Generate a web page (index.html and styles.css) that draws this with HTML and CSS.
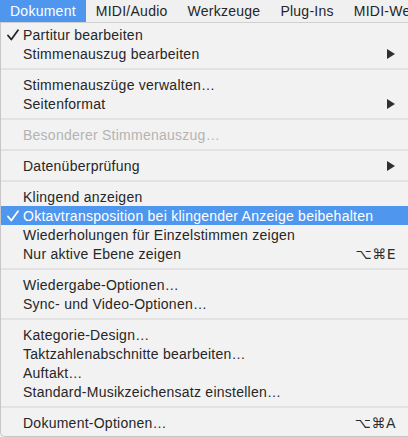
FILE: index.html
```html
<!DOCTYPE html>
<html lang="de">
<head>
<meta charset="utf-8">
<link rel="stylesheet" href="styles.css">
</head>
<body>
<div class="menubar">
  <div class="mb-item active">Dokument</div>
  <div class="mb-item">MIDI/Audio</div>
  <div class="mb-item">Werkzeuge</div>
  <div class="mb-item">Plug-Ins</div>
  <div class="mb-item">MIDI-Werkzeuge</div>
</div>
<div class="menu">
  <div class="row"><span class="check"><svg width="12" height="12" viewBox="0 0 12 12"><path d="M1 6.5 L4.3 10.5 L11 1.2" fill="none" stroke="currentColor" stroke-width="1.8" stroke-linecap="round" stroke-linejoin="round"/></svg></span><span class="label">Partitur bearbeiten</span></div>
  <div class="row"><span class="check"></span><span class="label">Stimmenauszug bearbeiten</span><span class="arrow"><svg width="8" height="10" viewBox="0 0 8 10"><polygon points="0,0 8,5 0,10" fill="currentColor"/></svg></span></div>
  <div class="sep"></div>
  <div class="row"><span class="check"></span><span class="label">Stimmenauszüge verwalten…</span></div>
  <div class="row"><span class="check"></span><span class="label">Seitenformat</span><span class="arrow"><svg width="8" height="10" viewBox="0 0 8 10"><polygon points="0,0 8,5 0,10" fill="currentColor"/></svg></span></div>
  <div class="sep"></div>
  <div class="row disabled"><span class="check"></span><span class="label">Besonderer Stimmenauszug…</span></div>
  <div class="sep"></div>
  <div class="row"><span class="check"></span><span class="label">Datenüberprüfung</span><span class="arrow"><svg width="8" height="10" viewBox="0 0 8 10"><polygon points="0,0 8,5 0,10" fill="currentColor"/></svg></span></div>
  <div class="sep"></div>
  <div class="row"><span class="check"></span><span class="label">Klingend anzeigen</span></div>
  <div class="row selected"><span class="check"><svg width="12" height="12" viewBox="0 0 12 12"><path d="M1 6.5 L4.3 10.5 L11 1.2" fill="none" stroke="currentColor" stroke-width="1.8" stroke-linecap="round" stroke-linejoin="round"/></svg></span><span class="label">Oktavtransposition bei klingender Anzeige beibehalten</span></div>
  <div class="row"><span class="check"></span><span class="label">Wiederholungen für Einzelstimmen zeigen</span></div>
  <div class="row"><span class="check"></span><span class="label">Nur aktive Ebene zeigen</span><span class="shortcut">⌥⌘E</span></div>
  <div class="sep"></div>
  <div class="row"><span class="check"></span><span class="label">Wiedergabe-Optionen…</span></div>
  <div class="row"><span class="check"></span><span class="label">Sync- und Video-Optionen…</span></div>
  <div class="sep"></div>
  <div class="row"><span class="check"></span><span class="label">Kategorie-Design…</span></div>
  <div class="row"><span class="check"></span><span class="label">Taktzahlenabschnitte bearbeiten…</span></div>
  <div class="row"><span class="check"></span><span class="label">Auftakt…</span></div>
  <div class="row"><span class="check"></span><span class="label">Standard-Musikzeichensatz einstellen…</span></div>
  <div class="sep"></div>
  <div class="row"><span class="check"></span><span class="label">Dokument-Optionen…</span><span class="shortcut">⌥⌘A</span></div>
</div>
</body>
</html>
```
FILE: styles.css
```css
html, body {
  margin: 0;
  padding: 0;
  background: #f2f2f2;
  overflow: hidden;
}
body {
  width: 408px;
  height: 437px;
  font-family: "Liberation Sans", Arial, sans-serif;
  font-size: 14px;
  letter-spacing: 0.25px;
  color: #262626;
}
.menubar {
  display: flex;
  height: 22px;
  background: #f0f0f0;
  border-bottom: 1px solid #d0d0d0;
  white-space: nowrap;
  overflow: hidden;
}
.mb-item {
  padding: 0 10px;
  line-height: 22px;
  flex: none;
}
.mb-item.active {
  background: #4f97ee;
  color: #ffffff;
}
.menu {
  display: flex;
  flex-direction: column;
  width: 420px;
  height: 414px;
  box-sizing: border-box;
  padding-top: 2px;
  background: #f2f2f2;
  border-left: 1px solid #c6c6c6;
  border-bottom: 1px solid #c6c6c6;
  border-bottom-left-radius: 5px;
}
.row {
  display: flex;
  align-items: center;
  height: 19px;
  flex: none;
  padding-right: 24px;
  white-space: nowrap;
}
.row.selected {
  background: #4f97ee;
  color: #ffffff;
}
.row.disabled {
  color: #b4b4b4;
}
.check {
  width: 22px;
  flex: none;
  display: flex;
  justify-content: flex-end;
  box-sizing: border-box;
}
.check svg {
  display: block;
  margin-right: 4px;
}
.label {
  flex: 1;
}
.arrow {
  display: flex;
  align-items: center;
  padding-right: 1px;
}
.arrow svg {
  display: block;
  color: #303030;
}
.shortcut {
  font-family: "DejaVu Sans", sans-serif;
  font-size: 14px;
  letter-spacing: 0.5px;
  color: #2a2a2a;
}
.sep {
  height: 12px;
  flex: none;
  display: flex;
  align-items: center;
}
.sep::after {
  content: "";
  display: block;
  width: 100%;
  height: 2px;
  background: #e2e2e2;
}
```
